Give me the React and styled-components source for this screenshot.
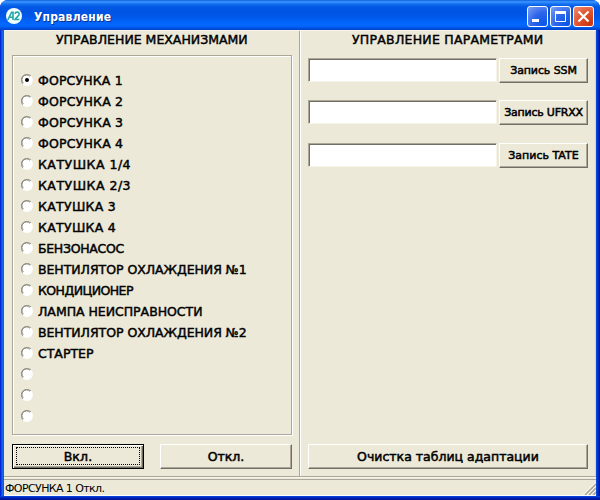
import React from 'react';
import styled, { createGlobalStyle, css } from 'styled-components';

const GlobalStyle = createGlobalStyle`
  *, *::before, *::after { box-sizing: border-box; }
  body { margin: 0; background: #fff; overflow: hidden; }
  button, input { font: inherit; margin: 0; border-radius: 0; outline: 0; }
`;

const Window = styled.div`
  width: 600px;
  height: 500px;
  display: flex;
  flex-direction: column;
  overflow: hidden;
  border-radius: 8px 8px 0 0;
  background: linear-gradient(90deg, #0019cf 0, #0831d9 1px, #166aee 2px, #0855dd 4px, #0855dd 596px, #0441d8 597px, #001dab 599px, #00138c 600px);
  font-family: 'DejaVu Sans', Verdana, sans-serif;
  color: #000;
`;

const TitleBar = styled.header`
  flex: 0 0 30px;
  display: flex;
  align-items: center;
  padding: 3px 6px 0 6px;
  background: linear-gradient(180deg, #0958d8 0, #2b85f5 1px, #3a93ff 2px, #1270ef 4px, #0258e5 7px, #0054e3 12px, #0056e8 16px, #0264fa 22px, #0468ff 25px, #0260f3 27px, #0049d4 29px, #0040c4 30px);
`;

const AppIcon = styled.svg`
  width: 16px;
  height: 16px;
  margin-bottom: 1px;
  display: block;
`;

const Title = styled.h1`
  flex: 1;
  margin: 0 0 0 12px;
  font: bold 12px/16px 'DejaVu Sans Condensed', 'DejaVu Sans', sans-serif;
  letter-spacing: 0.2px;
  color: #fff;
  text-shadow: 1px 1px 0 #0b2f8f;
`;

const Controls = styled.div`
  display: flex;
  gap: 2px;
`;

const ControlButton = styled.button`
  width: 21px;
  height: 21px;
  padding: 0;
  border: 1px solid #fff;
  border-radius: 3px;
  background: ${p => p.$close
    ? 'radial-gradient(circle at 85% 90%, #c9360f 0, #e0502c 50%, #ef9178 100%)'
    : 'radial-gradient(circle at 85% 90%, #0a55e8 0, #2e66ea 50%, #7ba2f5 100%)'};
  svg { display: block; width: 19px; height: 19px; }
`;

const Client = styled.main`
  flex: 0 0 446px;
  margin: 0 4px;
  display: flex;
  background: #ece9d8;
  border-top: 1px solid #f8f6ea;
`;

const Panel = styled.section`
  width: ${p => p.$width}px;
  padding: 0 8px;
  display: flex;
  flex-direction: column;
  border-right: ${p => (p.$divided ? '1px solid #aca899' : '1px solid #d8d4c4')};
  box-shadow: ${p => (p.$divided ? '1px 0 0 #fff' : 'none')};
`;

const Heading = styled.h2`
  margin: 0 0 7px;
  height: 17px;
  padding-left: ${p => p.$indent}px;
  font-size: 12.5px;
  line-height: 17px;
  font-weight: 400;
  white-space: nowrap;
  letter-spacing: ${p => p.$tracking}px;
  -webkit-text-stroke: 0.45px #000;
`;

const Group = styled.div`
  width: 280px;
  margin-right: -1px;
  height: 380px;
  padding: 14px 0 0 8px;
  border: 1px solid #aca899;
  box-shadow: 1px 1px 0 #fff, inset 1px 1px 0 #fff;
`;

const Option = styled.label`
  height: 21px;
  display: flex;
  align-items: center;
  gap: 5px;
  font-size: 12.5px;
  line-height: 21px;
  white-space: nowrap;
  letter-spacing: ${p => p.$tracking}px;
  -webkit-text-stroke: 0.45px #000;
  svg { width: 12px; height: 12px; flex: none; margin-bottom: 1px; }
`;

const Actions = styled.div`
  display: flex;
  gap: 16px;
  margin-top: ${p => p.$top}px;
`;

const Button = styled.button`
  flex: none;
  width: ${p => p.$width}px;
  height: 25px;
  padding: 0;
  background: #ece9d8;
  border: 1px solid;
  border-color: #fff #716f64 #716f64 #fff;
  box-shadow: inset -1px -1px 0 #aca899;
  font-size: ${p => p.$size || 12.5}px;
  line-height: 20px;
  white-space: nowrap;
  letter-spacing: ${p => p.$tracking || 0}px;
  color: #000;
  -webkit-text-stroke: 0.5px #000;
  ${p => p.$focused && css`
    padding: 2px 3px 3px;
    border-color: #000;
    box-shadow: inset 1px 1px 0 #fff, inset -1px -1px 0 #716f64, inset -2px -2px 0 #aca899;
  `}
`;

const FocusRing = styled.span`
  display: flex;
  justify-content: center;
  align-items: center;
  height: 18px;
  padding-top: 1px;
  border: 1px dotted #000;
`;

const Fields = styled.div`
  display: flex;
  flex-direction: column;
  gap: 17px;
  padding-top: 3px;
`;

const Field = styled.div`
  display: flex;
  align-items: flex-start;
  gap: 2px;
  &:last-child { margin-top: 1px; }
`;

const Input = styled.input`
  width: 189px;
  height: 24px;
  padding: 0 3px;
  background: #fff;
  border: 1px solid;
  border-color: #aca899 #f6f4e9 #f6f4e9 #aca899;
  box-shadow: inset 1px 1px 0 #716f64;
`;

const StatusBar = styled.footer`
  flex: 0 0 20px;
  margin: 0 4px;
  display: flex;
  justify-content: space-between;
  align-items: flex-end;
  background: linear-gradient(#aca899 0 1px, #f7f5e9 1px 2px, #ece9d8 2px 3px, #aca899 3px 4px, #ece9d8 4px);
  border-bottom: 1px solid #fff;
`;

const StatusText = styled.span`
  padding-left: 1px;
  font-size: 11px;
  line-height: 13px;
  letter-spacing: -0.6px;
`;

const Grip = styled.svg`
  width: 13px;
  height: 13px;
`;

const BottomFrame = styled.div`
  flex: 0 0 4px;
  background: linear-gradient(#0a4fe0 0, #0434cf 1px, #001fb5 2px, #00138c 4px);
`;

const options = [
  ['ФОРСУНКА 1', 0.15], ['ФОРСУНКА 2', 0.2], ['ФОРСУНКА 3', 0.2], ['ФОРСУНКА 4', 0.2],
  ['КАТУШКА 1/4', 0.5], ['КАТУШКА 2/3', 0.5], ['КАТУШКА 3', 0.3], ['КАТУШКА 4', 0.3],
  ['БЕНЗОНАСОС', -0.3], ['ВЕНТИЛЯТОР ОХЛАЖДЕНИЯ №1', -0.05], ['КОНДИЦИОНЕР', -0.55],
  ['ЛАМПА НЕИСПРАВНОСТИ', -0.03], ['ВЕНТИЛЯТОР ОХЛАЖДЕНИЯ №2', -0.05], ['СТАРТЕР', 0],
  ['', 0], ['', 0], ['', 0],
];

const fields = [['Запись SSM', -0.1], ['Запись UFRXX', -0.22], ['Запись TATE', 0]];

function Radio({ checked }) {
  return (
    <svg viewBox="0 0 12 12">
      <circle cx="6" cy="6" r="5.9" fill="#fff" />
      <path d="M1.9 10.1A5.6 5.6 0 0 1 10.1 1.9" fill="none" stroke="#aca899" />
      <path d="M2.3 9A4.7 4.7 0 0 1 9 2.3" fill="none" stroke="#716f64" strokeWidth=".9" />
      {checked && <circle cx="6" cy="6" r="2" fill="#000" />}
    </svg>
  );
}

export default function App() {
  return (
    <>
      <GlobalStyle />
      <Window>
        <TitleBar>
          <AppIcon viewBox="0 0 16 16">
            <circle cx="8" cy="8" r="8" fill="#f4ffff" />
            <path d="M1.8 12 5.6 4.2H7V12M3.2 9.3H7M9 5.8C9.5 3.5 13.5 3.6 13.2 6.2 13 8.2 9.8 9.5 9 11.5H13.4" fill="none" stroke="#24a5a5" strokeWidth="1.6" />
          </AppIcon>
          <Title>Управление</Title>
          <Controls>
            <ControlButton aria-label="Свернуть">
              <svg viewBox="0 0 19 19"><path d="M4 13.5h7" stroke="#fff" strokeWidth="3" /></svg>
            </ControlButton>
            <ControlButton aria-label="Развернуть">
              <svg viewBox="0 0 19 19"><path d="M4.5 5v9.5h10V5M4 5.5h11" fill="none" stroke="#fff" /><path d="M4 5.5h11" stroke="#fff" strokeWidth="3" /></svg>
            </ControlButton>
            <ControlButton $close aria-label="Закрыть">
              <svg viewBox="0 0 19 19"><path d="m4.5 4.5 10 10m0-10-10 10" stroke="#fff" strokeWidth="2.2" /></svg>
            </ControlButton>
          </Controls>
        </TitleBar>
        <Client>
          <Panel $width={296} $divided>
            <Heading $indent={44} $tracking={0}>УПРАВЛЕНИЕ МЕХАНИЗМАМИ</Heading>
            <Group>
              {options.map(([text, tracking], i) => (
                <Option key={i} $tracking={tracking}>
                  <Radio checked={i === 0} />
                  <span>{text}</span>
                </Option>
              ))}
            </Group>
            <Actions $top={9}>
              <Button $width={132} $focused $tracking={0.15}><FocusRing>Вкл.</FocusRing></Button>
              <Button $width={132}>Откл.</Button>
            </Actions>
          </Panel>
          <Panel $width={296}>
            <Heading $indent={44} $tracking={0.24}>УПРАВЛЕНИЕ ПАРАМЕТРАМИ</Heading>
            <Fields>
              {fields.map(([text, tracking]) => (
                <Field key={text}>
                  <Input aria-label={text} />
                  <Button $width={89} $size={11} $tracking={tracking}>{text}</Button>
                </Field>
              ))}
            </Fields>
            <Actions $top={276}>
              <Button $width={280}>Очистка таблиц адаптации</Button>
            </Actions>
          </Panel>
        </Client>
        <StatusBar>
          <StatusText>ФОРСУНКА 1 Откл.</StatusText>
          <Grip viewBox="0 0 13 13">
            <path d="M2 13 13 2M6 13l7-7M10 13l3-3" stroke="#aca899" strokeWidth="1.6" />
            <path d="M0 13 13 0M4 13l9-9M8 13l5-5" stroke="#fff" strokeWidth=".8" />
          </Grip>
        </StatusBar>
        <BottomFrame />
      </Window>
    </>
  );
}
